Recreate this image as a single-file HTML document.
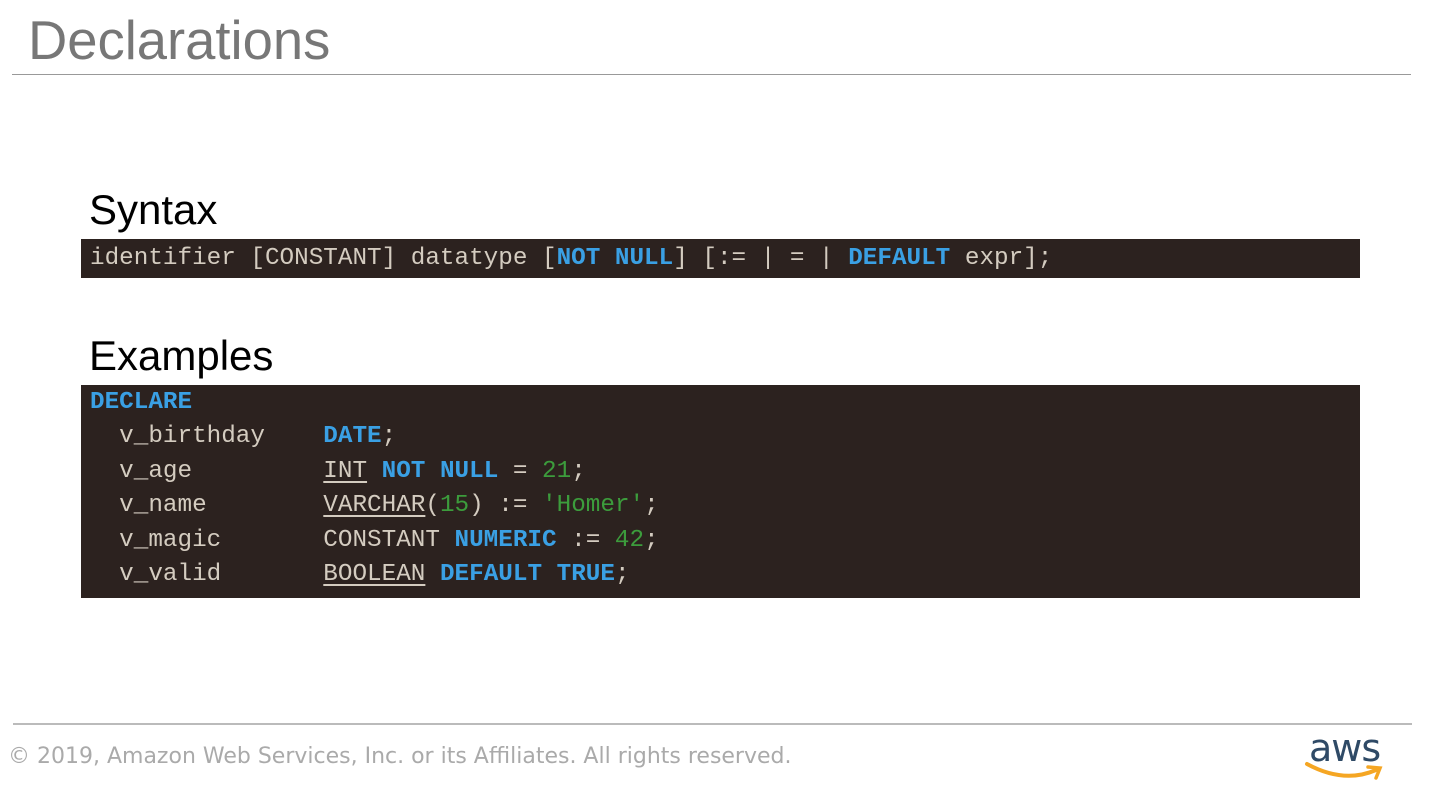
<!DOCTYPE html>
<html><head><style>
body{margin:0;width:1440px;height:811px;background:#fff;position:relative;overflow:hidden;font-family:"Liberation Sans",sans-serif}
.t{position:absolute;left:28px;top:9px;font-size:54.4px;color:#777}
.hr{position:absolute;left:12px;width:1399px;height:1px;background:#999}
.h{position:absolute;left:89px;font-size:42px;color:#000}
.box{position:absolute;left:81px;width:1279px;background:#2c221f}
pre{margin:0;font-family:"Liberation Mono",monospace;font-size:24.3px;color:#d4ccc0;position:absolute;left:9px;white-space:pre}
.k{color:#3aa0e4;font-weight:bold}
.g{color:#3c9c3c}
u{text-decoration-color:#d4ccc0;text-underline-offset:4px}
.f{position:absolute;left:8px;top:744px;font-size:22px;color:#aaa;font-family:"DejaVu Sans",sans-serif}
</style></head><body>
<div class="t">Declarations</div>
<div class="hr" style="top:74px"></div>
<div class="h" style="top:186px">Syntax</div>
<div class="box" style="top:239px;height:39px"><pre style="top:6px">identifier [CONSTANT] datatype [<span class="k">NOT NULL</span>] [:= | = | <span class="k">DEFAULT</span> expr];</pre></div>
<div class="h" style="top:332px">Examples</div>
<div class="box" style="top:385px;height:213px"><pre style="top:1px;line-height:34.4px"><span class="k">DECLARE</span>
  v_birthday    <span class="k">DATE</span>;
  v_age         <u>INT</u> <span class="k">NOT NULL</span> = <span class="g">21</span>;
  v_name        <u>VARCHAR</u>(<span class="g">15</span>) := <span class="g">'Homer'</span>;
  v_magic       CONSTANT <span class="k">NUMERIC</span> := <span class="g">42</span>;
  v_valid       <u>BOOLEAN</u> <span class="k">DEFAULT TRUE</span>;</pre></div>
<div class="hr" style="top:723px;left:13px;height:2px;background:#bbb"></div>
<div class="f">© 2019, Amazon Web Services, Inc. or its Affiliates. All rights reserved.</div>
<div style="position:absolute;left:1309px;top:726px;font-size:38px;color:#2f4a66;font-family:'DejaVu Sans',sans-serif;letter-spacing:-1px">aws</div>
<svg style="position:absolute;left:1304px;top:758px" width="82" height="24"><path d="M3 6 Q40 26 72 12" stroke="#f5a623" stroke-width="4" fill="none" stroke-linecap="round"/><path d="M64 9 L76 10 L72 20" stroke="#f5a623" stroke-width="3.5" fill="none" stroke-linecap="round"/></svg>
</body></html>
